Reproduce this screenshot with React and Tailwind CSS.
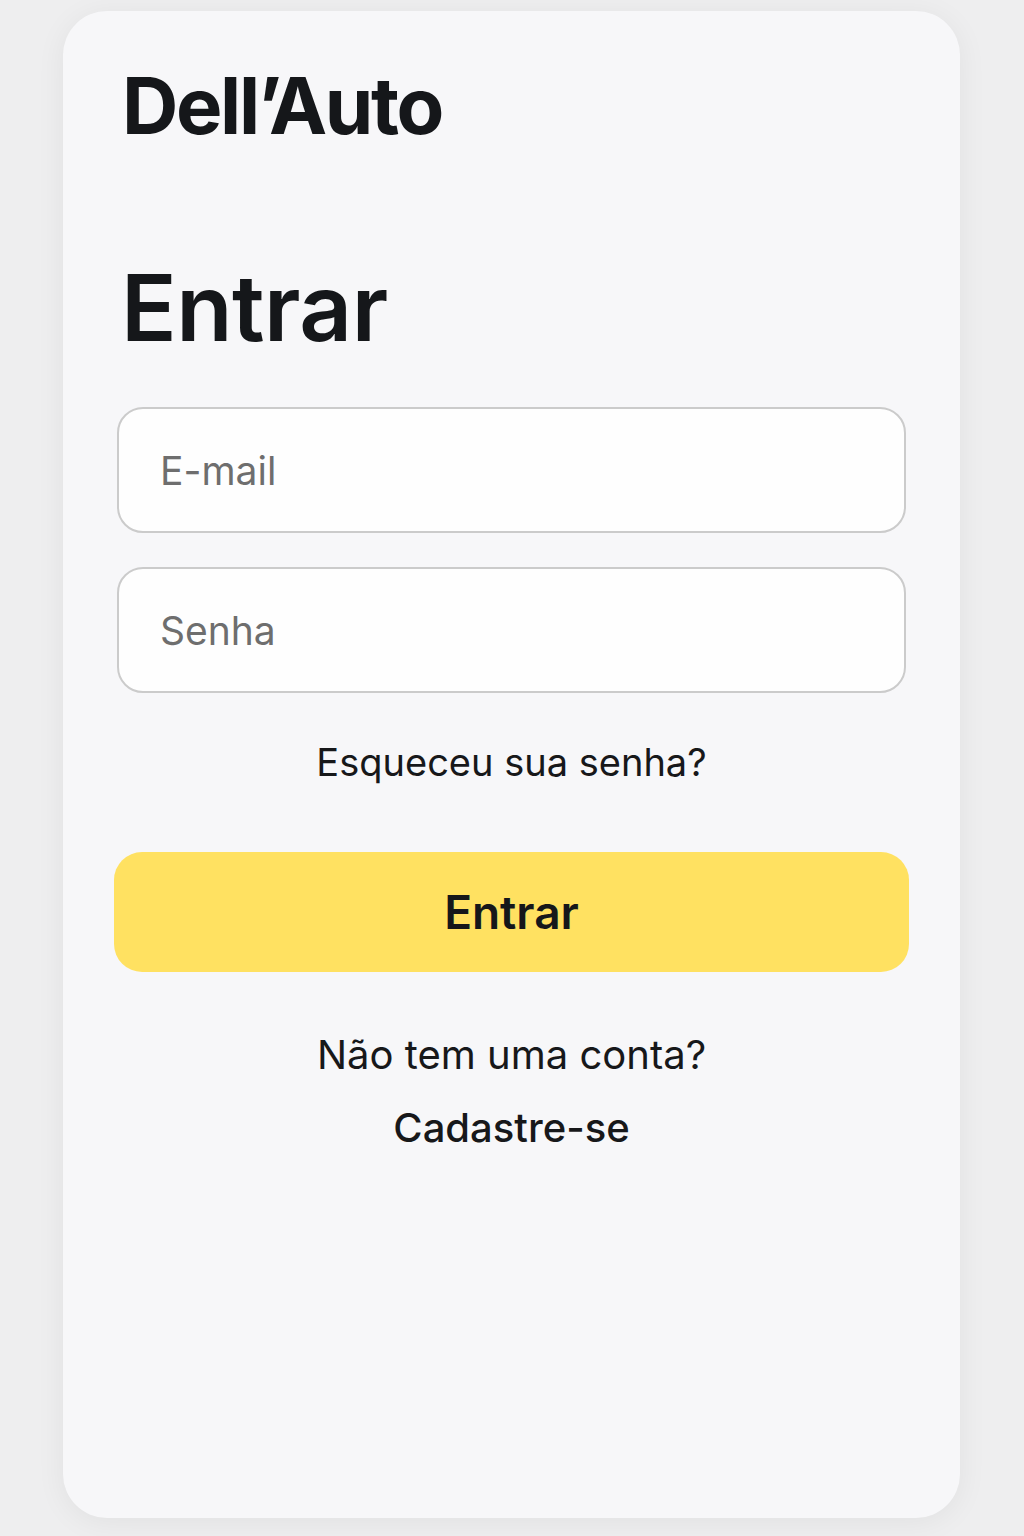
export default function App() {
  return (
    <div
      className="min-h-screen w-full bg-[#eeeeef] pt-[11px]"
      style={{ fontFamily: 'Inter, "Noto Sans", sans-serif' }}
    >
      <div className="ml-[63px] flex h-[1507px] w-[897px] flex-col rounded-[44px] bg-[#f7f7f9] px-[54px] shadow-[0_4px_30px_rgba(0,0,0,0.06)]">
        {/* Logo */}
        <h2 className="mt-[56px] pl-[5px] text-[78px] font-bold leading-none tracking-[-0.03em] text-[#15171a]">
          Dell’Auto
        </h2>

        {/* Heading */}
        <h1 className="mt-[117px] pl-[4px] text-[92px] font-semibold leading-none tracking-[-0.005em] text-[#15171a]">
          Entrar
        </h1>

        {/* Fields */}
        <div className="mt-[53px] flex flex-col gap-[34px]">
          <input
            type="email"
            placeholder="E-mail"
            className="h-[126px] w-full rounded-[26px] border-2 border-[#cbcbcb] bg-[#fefefe] px-[41px] text-[39px] text-[#222] outline-none placeholder:text-[#6e6e6e]"
          />
          <input
            type="password"
            placeholder="Senha"
            className="h-[126px] w-full rounded-[26px] border-2 border-[#cbcbcb] bg-[#fefefe] px-[41px] text-[39px] text-[#222] outline-none placeholder:text-[#6e6e6e]"
          />
        </div>

        <a className="mt-[50px] block text-center text-[38px] leading-none text-[#17181a]">
          Esqueceu sua senha?
        </a>

        <button className="-mx-[3px] mt-[71px] h-[120px] rounded-[28px] bg-[#ffe161] text-[46px] font-semibold text-[#15171a]">
          Entrar
        </button>

        <p className="mt-[63px] text-center text-[40px] leading-none text-[#17181a]">
          Não tem uma conta?
        </p>
        <a className="mt-[33px] block text-center text-[40px] font-medium leading-none text-[#17181a]">
          Cadastre-se
        </a>
      </div>
    </div>
  );
}
